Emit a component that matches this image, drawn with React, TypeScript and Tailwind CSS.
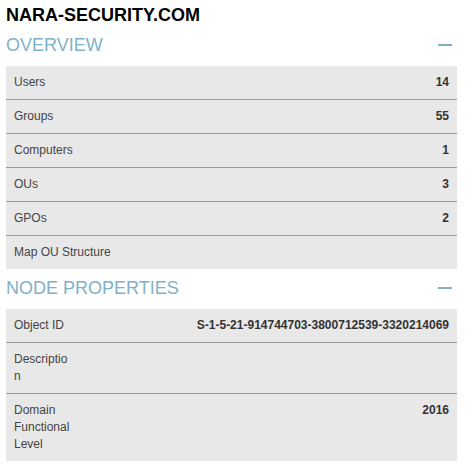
import React from "react";

const overview: [string, string][] = [
  ["Users", "14"],
  ["Groups", "55"],
  ["Computers", "1"],
  ["OUs", "3"],
  ["GPOs", "2"],
  ["Map OU Structure", ""],
];

const props: [string, string][] = [
  ["Object ID", "S-1-5-21-914744703-3800712539-3320214069"],
  ["Description", ""],
  ["Domain Functional Level", "2016"],
];

function Header({ title }: { title: string }) {
  return (
    <div className="flex items-center justify-between h-[40px] pb-[3px] pr-[5px]">
      <span className="text-[18px] text-[#7fb2c9] leading-none">{title}</span>
      <span className="block w-[14px] h-[2px] bg-[#7fb2c9]" />
    </div>
  );
}

export default function App() {
  return (
    <div
      className="w-[465px] h-[466px] bg-white pl-[6px] pt-[4px] text-[#444]"
      style={{ fontFamily: '"Liberation Sans", Arial, sans-serif' }}
    >
      <div className="w-[451px]">
        <div className="text-[18px] font-bold text-black leading-[22px]">NARA-SECURITY.COM</div>
        <Header title="OVERVIEW" />
        <div className="flex flex-col">
          {overview.map(([k, v], i) => (
            <div
              key={k}
              className={`box-content flex justify-between items-center bg-[#e8e8e8] px-[8px] h-[32px] pb-[1px] text-[12px] ${
                i < overview.length - 1 ? "border-b border-[#999]" : ""
              }`}
            >
              <span>{k}</span>
              <span className="font-bold text-[#333]">{v}</span>
            </div>
          ))}
        </div>
        <Header title="NODE PROPERTIES" />
        <div className="flex flex-col">
          {props.map(([k, v], i) => (
            <div
              key={k}
              className={`flex justify-between items-start bg-[#e8e8e8] px-[8px] py-[8px] text-[12px] leading-[17px] ${
                i < props.length - 1 ? "border-b border-[#999]" : ""
              }`}
            >
              <span className="w-[57px] break-words">{k}</span>
              <span className="font-bold text-right text-[#333]">{v}</span>
            </div>
          ))}
        </div>
      </div>
    </div>
  );
}
